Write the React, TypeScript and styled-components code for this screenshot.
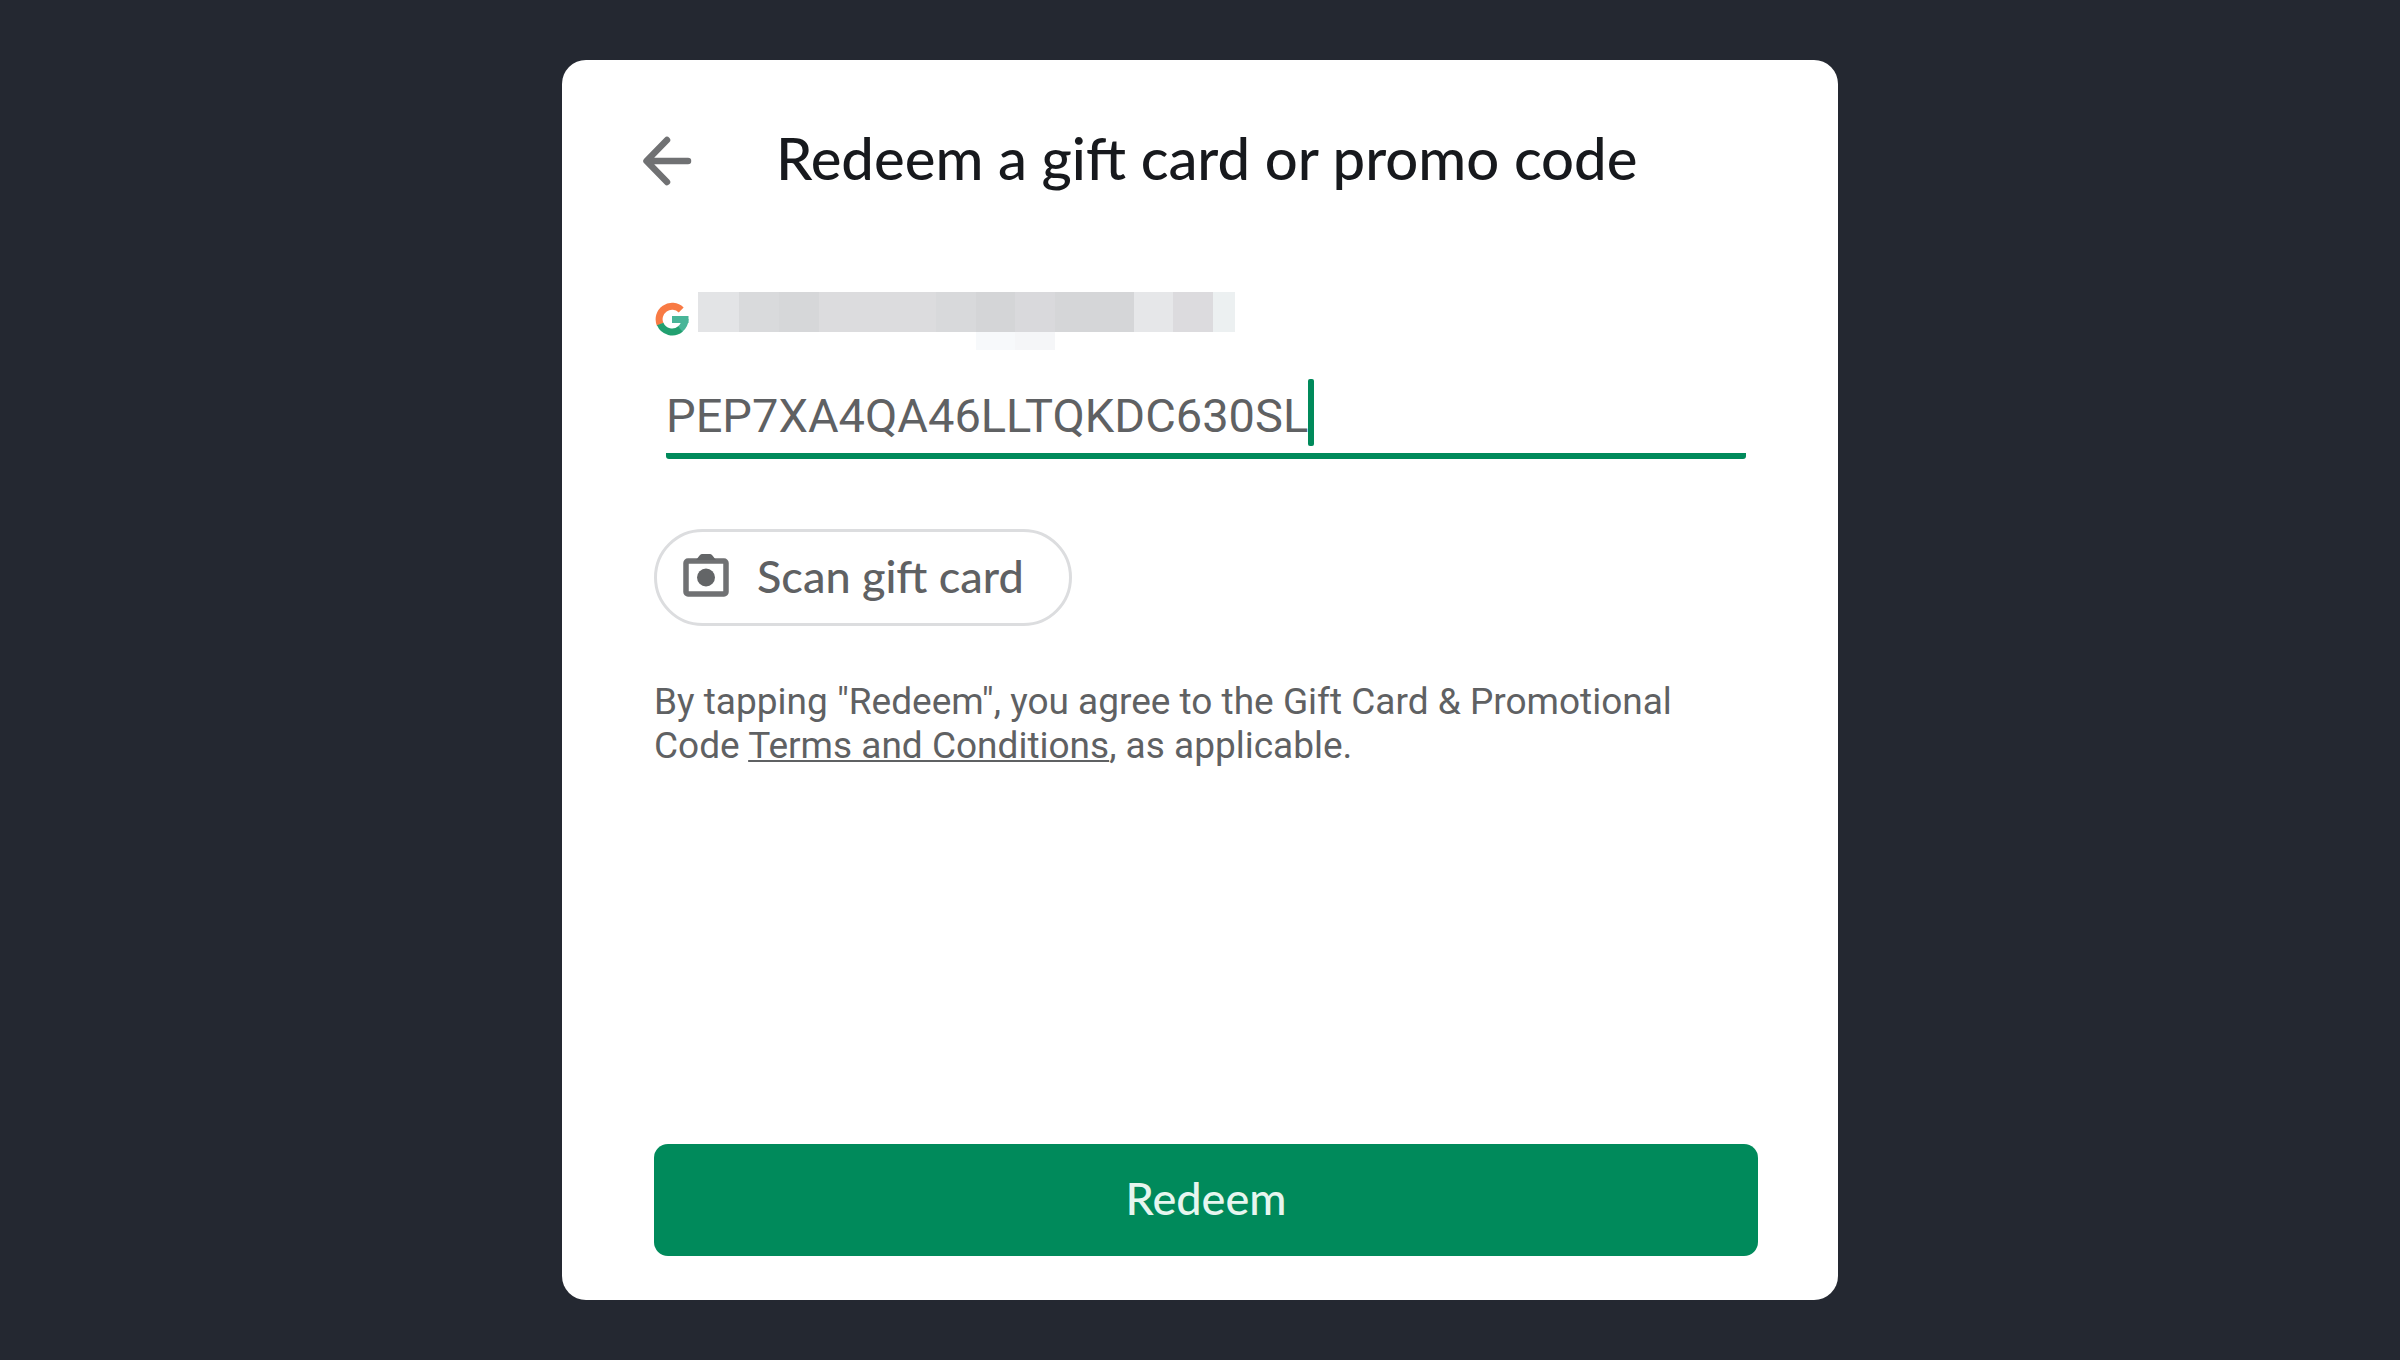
import React, { useState } from "react";
import styled, { createGlobalStyle } from "styled-components";

const green = "#008a5b";
const grey = "#5f6163";
const display = `Lato, "Open Sans", sans-serif`;
const body = `Roboto, "Noto Sans", sans-serif`;

const GlobalStyle = createGlobalStyle`
  * { box-sizing: border-box; }
  body { margin: 0; background: #242831; font-family: ${body}; }
`;

const Page = styled.div`
  min-height: 100vh;
  padding: 60px 24px;
  display: flex;
  justify-content: center;
`;

const Card = styled.main`
  width: 100%;
  max-width: 1276px;
  padding: 60px 80px 44px;
  display: flex;
  flex-direction: column;
  background: #fff;
  border-radius: 24px;
`;

const Header = styled.header`
  display: flex;
  align-items: flex-start;
  gap: 84px;
`;

const BackButton = styled.button`
  width: 50px;
  height: 50px;
  margin-top: 16px;
  padding: 0;
  border: 0;
  background: none;
  display: flex;
`;

const Title = styled.h1`
  margin: 0;
  font: 500 58px/76px ${display};
  color: #17191d;
`;

const Form = styled.form`
  flex: 1;
  padding-left: 12px;
  display: flex;
  flex-direction: column;
  align-items: flex-start;
`;

const Account = styled.div`
  margin-top: 96px;
  height: 58px;
  display: flex;
  align-items: flex-start;
  gap: 9px;
`;

const Logo = styled.svg`
  width: 34px;
  height: 34px;
  margin: 10px 0 0 1px;
`;

const Mask = styled.div`
  display: flex;
`;

const Block = styled.span<{ $size: number; $tone: string; $tail?: string }>`
  width: ${(p) => p.$size}px;
  height: 58px;
  background: linear-gradient(${(p) => p.$tone} 40px, ${(p) => p.$tail ?? "transparent"} 40px);
`;

const Field = styled.label`
  align-self: stretch;
  margin: 29px 12px 0;
  height: 80px;
  display: flex;
  align-items: flex-start;
  border-bottom: 6px solid ${green};
  border-radius: 3px;
`;

const CodeInput = styled.input`
  field-sizing: content;
  height: 74px;
  padding: 0;
  border: 0;
  outline: 0;
  background: none;
  font: 400 47px/74px ${body};
  color: ${grey};
`;

const Caret = styled.span`
  width: 6px;
  height: 67px;
  border-radius: 2px;
  background: ${green};
`;

const ScanButton = styled.button`
  margin-top: 70px;
  height: 97px;
  padding: 0 45px 4px 26px;
  display: flex;
  align-items: center;
  gap: 28px;
  border: 3px solid #dcdddf;
  border-radius: 49px;
  background: #fff;
  font: 500 45px/56px ${display};
  color: ${grey};
`;

const Terms = styled.p`
  margin: 54px 0 0;
  font: 400 37px/44px ${body};
  color: ${grey};

  a {
    color: inherit;
    text-decoration-thickness: 2px;
    text-underline-offset: 2px;
    text-decoration-skip-ink: none;
  }
`;

const RedeemButton = styled.button`
  align-self: stretch;
  margin-top: auto;
  height: 112px;
  padding: 0 0 4px;
  border: 0;
  border-radius: 14px;
  background: ${green};
  font: 500 45px/56px ${display};
  color: #e6f6ef;
`;

const blocks = [
  { size: 41, tone: "#e3e4e6" },
  { size: 40, tone: "#d9dadc" },
  { size: 40, tone: "#d6d7d9" },
  { size: 117, tone: "#dcdcde" },
  { size: 40, tone: "#d8d9db" },
  { size: 39, tone: "#d4d5d7", tail: "#f7f9fb" },
  { size: 40, tone: "#d9d9dc", tail: "#f5f6f8" },
  { size: 79, tone: "#d5d6d8" },
  { size: 39, tone: "#e6e7e9" },
  { size: 40, tone: "#dcdbde" },
  { size: 22, tone: "#ecf0f1" },
];

export default function App() {
  const [code, setCode] = useState("PEP7XA4QA46LLTQKDC630SL");

  return (
    <>
      <GlobalStyle />
      <Page>
        <Card>
          <Header>
            <BackButton type="button" aria-label="Back">
              <svg width="50" height="50" viewBox="0 0 50 50" fill="none" stroke="#707173" strokeWidth="6.500" strokeLinecap="round" strokeLinejoin="round">
                <path d="M46 25H5M25 4 4.500 25l20.500 21" />
              </svg>
            </BackButton>
            <Title>Redeem a gift card or promo code</Title>
          </Header>
          <Form onSubmit={(e) => e.preventDefault()}>
            <Account>
              <Logo viewBox="0 0 34 34" fill="none" strokeWidth="7" aria-hidden="true">
                <path d="M30 17a13 13 0 0 1-5 10.200" stroke="#48b598" />
                <path d="M17 17.500h16.500" stroke="#48b598" />
                <path d="M26.200 8A13 13 0 0 0 5.200 22.500" stroke="#f87a44" />
                <path d="M5.200 22A13 13 0 0 0 25.400 27" stroke="#22a070" />
              </Logo>
              <Mask aria-label="Hidden account">
                {blocks.map((b, i) => (
                  <Block key={i} $size={b.size} $tone={b.tone} $tail={b.tail} />
                ))}
              </Mask>
            </Account>
            <Field>
              <CodeInput aria-label="Code" value={code} onChange={(e) => setCode(e.target.value)} />
              <Caret />
            </Field>
            <ScanButton type="button">
              <svg width="46" height="43" viewBox="0 0 46 43" aria-hidden="true">
                <rect x="3" y="7" width="40" height="33" rx="2" fill="none" stroke="#707173" strokeWidth="5.500" />
                <path d="M13 6l4-5q1-1 2-1h8q1 0 2 1l4 5z" fill="#636567" />
                <circle cx="23" cy="23.500" r="9" fill="#636567" />
              </svg>
              Scan gift card
            </ScanButton>
            <Terms>
              By tapping "Redeem", you agree to the Gift Card &amp; Promotional Code{" "}
              <a href="#terms">Terms and Conditions</a>, as applicable.
            </Terms>
            <RedeemButton type="submit">Redeem</RedeemButton>
          </Form>
        </Card>
      </Page>
    </>
  );
}
